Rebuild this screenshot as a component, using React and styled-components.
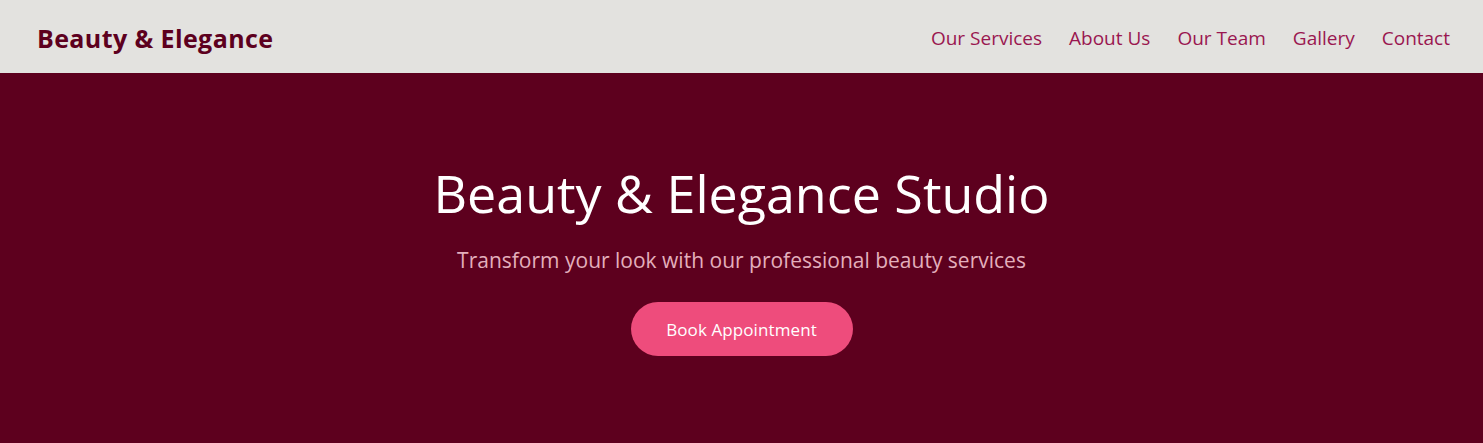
import React from 'react';
import styled, { createGlobalStyle } from 'styled-components';

const GlobalStyle = createGlobalStyle`
body {
  margin: 0;
  font-family: "Open Sans", "Noto Sans", sans-serif;
  background: #5d001e;
}
`

const Header = styled.header`
display: flex;
align-items: center;
justify-content: space-between;
height: 73px;
padding: 0 33px 0 37px;
background-color: #e3e2df;
box-shadow: 0 2px 4px rgba(0,0,0,0.1);
`

const Logo = styled.div`
font-size: 25px;
font-weight: 700;
color: #5d001e;
letter-spacing: 0.4px;
margin-top: 2px;
`

const Nav = styled.nav`
display: flex;
gap: 27px;
margin-top: 2px;
`

const NavLink = styled.a`
font-size: 19px;
color: #9a1750;
text-decoration: none;
cursor: pointer;
`

const Hero = styled.section`
display: flex;
flex-direction: column;
align-items: center;
padding: 89px 20px 88px;
background-color: #5d001e;
text-align: center;
`

const Title = styled.h1`
margin: 0;
font-size: 52px;
font-weight: 400;
color: #ffffff;
line-height: 62px;
`

const Subtitle = styled.p`
margin: 22px 0 28px;
font-size: 21px;
line-height: 28px;
color: #e3afbc;
`

const Button = styled.button`
width: 222px;
height: 54px;
border: none;
border-radius: 27px;
background-color: #ee4c7c;
color: #ffffff;
font-family: inherit;
font-size: 17px;
letter-spacing: 0.1px;
cursor: pointer;
`

const links = ["Our Services", "About Us", "Our Team", "Gallery", "Contact"];

const App = () => {
  return (
    <>
      <GlobalStyle />
      <Header>
        <Logo>Beauty &amp; Elegance</Logo>
        <Nav>
          {links.map(l => <NavLink key={l}>{l}</NavLink>)}
        </Nav>
      </Header>
      <Hero>
        <Title>Beauty &amp; Elegance Studio</Title>
        <Subtitle>Transform your look with our professional beauty services</Subtitle>
        <Button>Book Appointment</Button>
      </Hero>
    </>
  )
}

export default App;
